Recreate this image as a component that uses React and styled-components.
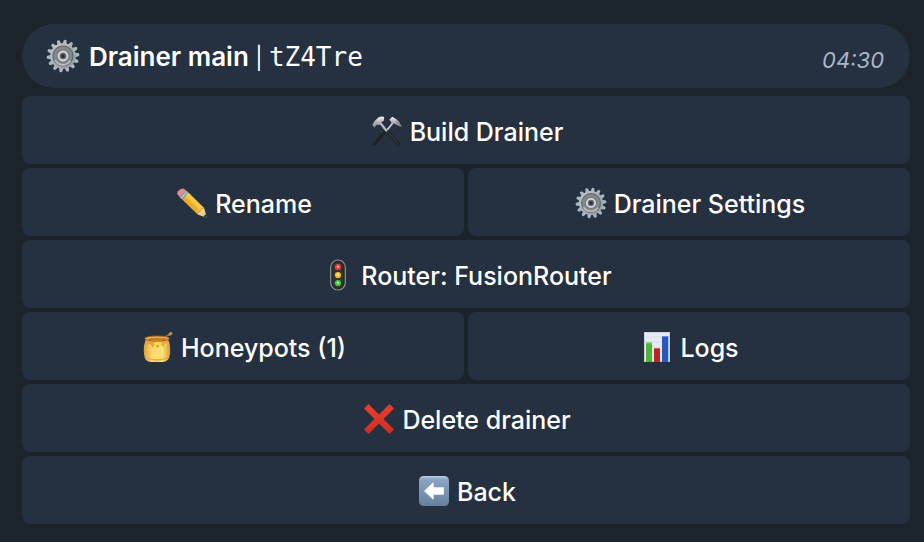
import React from "react";
import styled, { createGlobalStyle } from "styled-components";

const GlobalStyle = createGlobalStyle`
  * { box-sizing: border-box; }
  html { min-height: 100%; background: #1b232b; }
  body { margin: 0; background: #1b232b; font-family: Inter, "Liberation Sans", sans-serif; }
`;

const Page = styled.main`
  padding: 24px 14px 18px 22px;
  display: flex;
  flex-direction: column;
  gap: 8px;
`;

const Message = styled.header`
  display: flex;
  align-items: center;
  justify-content: space-between;
  min-height: 64px;
  padding: 0 26px 0 24px;
  border-radius: 32px;
  background: #253040;
`;

const Title = styled.h1`
  display: flex;
  align-items: center;
  gap: 9px;
  margin: 0;
  color: #fff;
  font-size: 26px;
  line-height: 32px;
  font-weight: 600;
  white-space: pre;
`;

const TitleText = styled.span`
  padding-top: 3px;
`;

const Divider = styled.span`
  font-size: 22px;
  font-weight: 400;
`;

const Code = styled.code`
  font-family: "DejaVu Sans Mono", monospace;
  font-size: 26px;
  font-weight: 400;
`;

const Time = styled.time`
  padding-top: 8px;
  color: #a9b7c9;
  font-size: 22px;
  line-height: 32px;
  font-style: italic;
`;

const Keyboard = styled.nav`
  display: grid;
  grid-template-columns: 1fr 1fr;
  gap: 4px;
`;

const Key = styled.button`
  grid-column: ${(p) => (p.$wide ? "1 / -1" : "auto")};
  display: flex;
  align-items: center;
  justify-content: center;
  gap: 7px;
  min-height: 68px;
  padding: 2px 16px 0 18px;
  border: 0;
  border-radius: 8px;
  background: #253040;
  color: #fff;
  font: 550 25px/32px Inter, "Liberation Sans", sans-serif;
  cursor: pointer;
  &:hover { background: #2b384a; }
`;

const KeyLabel = styled.span`
  padding-top: 2px;
`;

const Icon = styled.svg.attrs({ viewBox: "0 0 32 32", "aria-hidden": true })`
  flex: none;
  width: ${(p) => p.$size || 32}px;
  height: ${(p) => p.$size || 32}px;
`;

const teeth = Array.from({ length: 14 }, (_, i) => (i * 360) / 14);

function Gear({ size, id }) {
  return (
    <Icon $size={size}>
      <defs>
        <linearGradient id={id} x1="0" y1="0" x2="1" y2="1">
          <stop offset="0" stopColor="#c3c9ce" />
          <stop offset="1" stopColor="#8d949b" />
        </linearGradient>
      </defs>
      {teeth.map((a) => (
        <path key={a} d="M13.7 5.5 14.8.9Q16 .3 17.2.9L18.3 5.5Z" fill="#afb7be" transform={`rotate(${a + 8} 16 16)`} />
      ))}
      <circle cx="16" cy="16" r="12" fill={`url(#${id})`} />
      <circle cx="16" cy="16" r="9.4" fill="#85898e" stroke="#63686d" strokeWidth="1.1" />
      <path d="M8.6 20A8.4 8.4 0 0 0 23 20.5" fill="none" stroke="#b7bcc0" strokeWidth="1.6" />
      <circle cx="16" cy="16" r="6.2" fill="#74797e" />
      <circle cx="16" cy="16" r="4.2" fill="#6b6f73" stroke="#d7dce0" strokeWidth="1.8" />
      <circle cx="16" cy="16" r="1.8" fill="#292e35" />
    </Icon>
  );
}

function Hammers() {
  return (
    <Icon>
      <defs>
        <linearGradient id="steel" x1="0" y1="0" x2="0" y2="1">
          <stop offset="0" stopColor="#f1f1f1" />
          <stop offset="1" stopColor="#777b80" />
        </linearGradient>
      </defs>
      <path d="m22.5 7-8 10" stroke="#c3c6ca" strokeWidth="2" />
      <path d="M14.8 16.5 3.2 29.2" stroke="#202224" strokeWidth="3.2" strokeLinecap="round" />
      <path d="m8.5 7 8 10" stroke="#b9bdc1" strokeWidth="2.2" />
      <path d="m17 17.2 10.7 12" stroke="#242628" strokeWidth="3.5" strokeLinecap="round" />
      <path d="m16.8 16.8 9.7 11" stroke="#444648" strokeWidth=".8" />
      <path d="M1.2 10 3.7 6 7.3 2.6Q10.5 1 13.2 2L12.9 5.4 10.2 7.6 8 10.3 5.6 9.8 3.6 12.8Z" fill="url(#steel)" />
      <path d="M18.4 4.4 21.3 1.7 25 4.1Q28.8 6.6 31 12 26.2 10.8 23.1 8.6L20.5 7.8Z" fill="url(#steel)" />
      <path d="m24.5 6.1 4.3 3.6" stroke="#8e5c5d" strokeWidth=".8" />
    </Icon>
  );
}

function Pencil() {
  return (
    <Icon>
      <defs>
        <linearGradient id="wood" x1="0" y1="1" x2="1" y2="0">
          <stop offset="0" stopColor="#d99b19" />
          <stop offset=".45" stopColor="#e8b12a" />
          <stop offset=".55" stopColor="#f6cc4e" />
          <stop offset="1" stopColor="#dfa323" />
        </linearGradient>
      </defs>
      <path d="M1.3 7.1Q.7 5.8 2 4.2 4.5 1.2 7.3 1.4L10.2 3.6 4.3 10.7Z" fill="#ed8b8a" />
      <path d="M3.7 10.1 9.3 3.1 13 6 7 13.3Z" fill="#8ca0b4" />
      <path d="m5 11.4 5.9-7" stroke="#cbd4dd" strokeWidth="1" />
      <path d="M6.5 12.8 12.5 5.5 28.2 21.1Q25.4 21.7 24.7 24.1 22.3 24.2 21.6 27.5Z" fill="url(#wood)" />
      <path d="M21.6 27.5Q22.2 24.3 24.7 24.1 25.3 21.5 28.2 21.1L30.8 30.7Z" fill="#edcc91" />
      <path d="M27.8 29.6Q28.5 27.6 30 27.6L31 31Z" fill="#252a30" />
    </Icon>
  );
}

function TrafficLight() {
  return (
    <Icon>
      <rect x="8.7" y="1" width="14.6" height="30" rx="7.3" fill="#252729" stroke="#909496" strokeWidth="1.2" />
      <rect x="10.7" y="3" width="10.6" height="26" rx="5.3" fill="#343332" />
      <circle cx="16" cy="8" r="3.1" fill="#ed3b3c" />
      <circle cx="16" cy="16" r="3.1" fill="#f2bd22" />
      <circle cx="16" cy="24" r="3.1" fill="#36cb3d" />
      <circle cx="16" cy="7.7" r="1.3" fill="#ffaaa5" />
      <circle cx="16" cy="15.7" r="1.3" fill="#fff198" />
      <circle cx="16" cy="23.7" r="1.3" fill="#a7f58b" />
    </Icon>
  );
}

function Honey() {
  return (
    <Icon>
      <defs>
        <linearGradient id="pot" x1="0" y1="0" x2="1" y2="0">
          <stop offset="0" stopColor="#dda03b" />
          <stop offset=".3" stopColor="#fbd66a" />
          <stop offset=".7" stopColor="#ffe274" />
          <stop offset="1" stopColor="#d79a37" />
        </linearGradient>
      </defs>
      <path d="m20 8 8-5" stroke="#a66b34" strokeWidth="1.6" />
      <ellipse cx="28.5" cy="2.8" rx="2.2" ry="1.5" fill="#c38b52" transform="rotate(-38 28.5 2.8)" />
      <path d="M4.2 8Q1 14 2 23 2.6 31 9 31H20.5Q27 31 28 23 29 14 25.5 8Z" fill="url(#pot)" />
      <path d="M4 9H26Q28 11 27.4 14 25 14 24.5 12 22.5 12 22.2 14 21.3 18 19.8 14 18.2 12 16.9 15 16 19 14.2 15 13 12.5 11.7 15 10.2 19 9 14 7.8 12 6.5 13 4.5 15 3.3 12Z" fill="#e5a542" />
      <ellipse cx="15" cy="7.5" rx="12.2" ry="2.5" fill="#e9b957" stroke="#a85f22" strokeWidth="1" />
      <ellipse cx="15.3" cy="8" rx="9.8" ry="1.3" fill="#c8792c" />
      <ellipse cx="16" cy="12.4" rx="4" ry="1.6" fill="#ffe12e" />
      <path d="M5 27Q15 31 25.5 27" fill="none" stroke="#e0a33c" strokeWidth="1.3" />
    </Icon>
  );
}

function Chart() {
  return (
    <Icon>
      <rect x="3" y="1" width="26" height="30" fill="#e5ebf3" />
      <path d="M3 6h26M3 11h26M3 16h26M3 21h26M3 26h26" stroke="#ced7e2" strokeWidth=".6" />
      <rect x="3.4" y="1.4" width="25.2" height="29.2" fill="none" stroke="#c4cbd4" strokeWidth=".8" />
      <rect x="5" y="11.5" width="6" height="19.5" fill="#4fb735" />
      <rect x="13" y="17" width="6" height="14" fill="#b42920" />
      <rect x="21" y="5" width="6.3" height="26" fill="#2859b8" />
      <path d="M5 12h6" stroke="#86d66f" />
      <path d="M13 17.5h6" stroke="#d65a4e" />
      <path d="M21 5.5h6.3" stroke="#648bda" />
    </Icon>
  );
}

function Cross() {
  return (
    <Icon>
      <defs>
        <linearGradient id="crossRed" x1="0" y1="0" x2="0" y2="1">
          <stop offset="0" stopColor="#e93c2e" />
          <stop offset="1" stopColor="#d02e22" />
        </linearGradient>
      </defs>
      <path d="M1 5.5 5.5 1 16 11.5 26.5 1 31 5.5 20.5 16 31 26.5 26.5 31 16 20.5 5.5 31 1 26.5 11.5 16Z" fill="url(#crossRed)" />
    </Icon>
  );
}

function BackArrow() {
  return (
    <Icon>
      <defs>
        <linearGradient id="tile" x1="0" y1="0" x2="0" y2="1">
          <stop offset="0" stopColor="#a3bdd8" />
          <stop offset=".15" stopColor="#87a3c0" />
          <stop offset="1" stopColor="#67819e" />
        </linearGradient>
      </defs>
      <rect x="1" y="1" width="30" height="30" rx="4.5" fill="url(#tile)" />
      <path d="M4 3Q5 1.7 7 1.7H25Q27 1.7 28.5 3" fill="none" stroke="#c6d9ea" strokeWidth=".8" />
      <path d="M6.5 16 15.2 7.8V12.7H25.5V19.3H15.2V24.2Z" fill="#fff" stroke="#fff" strokeWidth=".8" strokeLinejoin="round" />
    </Icon>
  );
}

const keys = [
  { label: "Build Drainer", icon: <Hammers />, wide: true },
  { label: "Rename", icon: <Pencil /> },
  { label: "Drainer Settings", icon: <Gear id="gearKey" /> },
  { label: "Router: FusionRouter", icon: <TrafficLight />, wide: true },
  { label: "Honeypots (1)", icon: <Honey /> },
  { label: "Logs", icon: <Chart /> },
  { label: "Delete drainer", icon: <Cross />, wide: true },
  { label: "Back", icon: <BackArrow />, wide: true },
];

export default function App() {
  return (
    <>
      <GlobalStyle />
      <Page>
        <Message>
          <Title>
            <Gear size={34} id="gearTitle" />
            <TitleText>
              Drainer main <Divider>| </Divider>
              <Code>tZ4Tre</Code>
            </TitleText>
          </Title>
          <Time dateTime="04:30">04:30</Time>
        </Message>
        <Keyboard aria-label="Bot actions">
          {keys.map((k) => (
            <Key key={k.label} type="button" $wide={k.wide}>
              {k.icon}
              <KeyLabel>{k.label}</KeyLabel>
            </Key>
          ))}
        </Keyboard>
      </Page>
    </>
  );
}
